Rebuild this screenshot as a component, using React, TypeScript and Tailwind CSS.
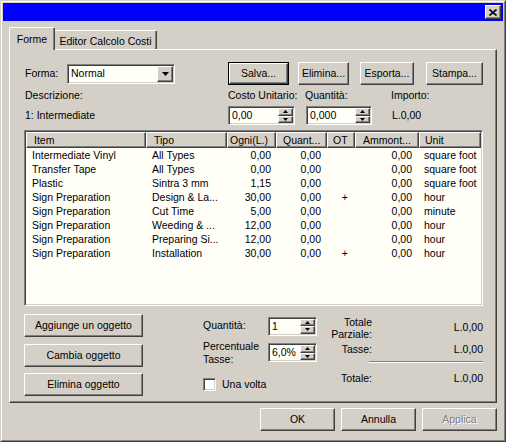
import React from 'react';

const RAISED =
  'border border-t-white border-l-white border-r-[#404040] border-b-[#404040] shadow-[inset_-1px_-1px_0_#808080] bg-[#d4d0c8]';
const SUNKEN =
  'border border-t-[#808080] border-l-[#808080] border-r-white border-b-white shadow-[inset_1px_1px_0_#404040,inset_-1px_-1px_0_#d4d0c8]';

const Btn: React.FC<{ className?: string; children: React.ReactNode; disabled?: boolean }> = ({
  className = '',
  children,
  disabled,
}) => (
  <div className={`${RAISED} flex items-center justify-center ${className}`}>
    <span className={disabled ? 'text-[#808080] [text-shadow:1px_1px_0_#fff]' : ''}>{children}</span>
  </div>
);

const Arrow: React.FC<{ up?: boolean }> = ({ up }) => (
  <svg width="5" height="3" viewBox="0 0 5 3">
    <polygon points={up ? '2.5,0 5,3 0,3' : '0,0 5,0 2.5,3'} fill="#000" />
  </svg>
);

const SpinField: React.FC<{ value: string; className?: string }> = ({ value, className = '' }) => (
  <div className={`${SUNKEN} bg-[#fffff8] flex h-[19px] ${className}`}>
    <span className="flex-1 pl-[3px] leading-[17px]">{value}</span>
    <div className="flex flex-col w-[16px] py-[1px] pr-[1px]">
      <div className={`${RAISED} flex-1 flex items-center justify-center`}>
        <Arrow up />
      </div>
      <div className={`${RAISED} flex-1 flex items-center justify-center`}>
        <Arrow />
      </div>
    </div>
  </div>
);

const COLS = [
  { label: 'Item', w: 'w-[120px]', head: 'pl-[7px]', cell: 'pl-[6px] text-left' },
  { label: 'Tipo', w: 'w-[81px]', head: 'pl-[7px]', cell: 'pl-[6px] text-left' },
  { label: 'Ogni(L.)', w: 'w-[49px]', head: 'pl-[2px]', cell: 'pr-[5px] text-right' },
  { label: 'Quant...', w: 'w-[51px]', head: 'pl-[6px]', cell: 'pr-[6px] text-right' },
  { label: 'OT', w: 'w-[28px]', head: 'pl-[5px]', cell: 'pr-[7px] text-right' },
  { label: 'Ammont...', w: 'w-[64px]', head: 'pl-[7px]', cell: 'pr-[7px] text-right' },
  { label: 'Unit', w: 'w-[62px]', head: 'pl-[5px]', cell: 'pl-[5px] text-left' },
];

const ROWS = [
  ['Intermediate Vinyl', 'All Types', '0,00', '0,00', '', '0,00', 'square foot'],
  ['Transfer Tape', 'All Types', '0,00', '0,00', '', '0,00', 'square foot'],
  ['Plastic', 'Sintra 3 mm', '1,15', '0,00', '', '0,00', 'square foot'],
  ['Sign Preparation', 'Design & La...', '30,00', '0,00', '+', '0,00', 'hour'],
  ['Sign Preparation', 'Cut Time', '5,00', '0,00', '', '0,00', 'minute'],
  ['Sign Preparation', 'Weeding & ...', '12,00', '0,00', '', '0,00', 'hour'],
  ['Sign Preparation', 'Preparing Si...', '12,00', '0,00', '', '0,00', 'hour'],
  ['Sign Preparation', 'Installation', '30,00', '0,00', '+', '0,00', 'hour'],
];

export default function App() {
  return (
    <div className="w-[506px] h-[442px] bg-[#d4d0c8] text-black text-[10.5px] font-['Liberation_Sans',Arial,sans-serif] border border-t-[#d4d0c8] border-l-[#d4d0c8] border-r-[#404040] border-b-[#404040] overflow-hidden">
      <div className="h-full border border-t-white border-l-white border-r-[#808080] border-b-[#808080] p-[1px] flex flex-col">
        {/* title bar */}
        <div className="h-[18px] bg-[#0000ff] flex items-center justify-end pr-[2px]">
          <div className={`${RAISED} w-[16px] h-[14px] flex items-center justify-center`}>
            <svg width="8" height="7" viewBox="0 0 8 7">
              <path d="M0.5 0.5 L7.5 6.5 M7.5 0.5 L0.5 6.5" stroke="#000" strokeWidth="1.6" />
            </svg>
          </div>
        </div>

        <div className="px-[6px]">
          {/* tabs */}
          <div className="flex items-end h-[22px] mt-[6px]">
            <div className="relative z-10 h-[23px] -mb-[1px] w-[46px] bg-[#d4d0c8] border-t border-l border-r border-t-white border-l-white border-r-[#404040] rounded-t-[2px] shadow-[inset_-1px_0_0_#808080] flex justify-center pt-[4px]">
              Forme
            </div>
            <div className="h-[19px] w-[102px] border-t border-r border-t-white border-r-[#404040] rounded-tr-[2px] shadow-[inset_-1px_0_0_#808080] flex justify-center pt-[3px]">
              Editor Calcolo Costi
            </div>
          </div>

          {/* panel */}
          <div className="h-[354px] border border-t-white border-l-white border-r-[#404040] border-b-[#404040] shadow-[inset_-1px_-1px_0_#808080] pl-[14px] pt-[12px]">
            <div className="flex items-center h-[23px]">
              <span className="w-[43px] pl-[1px]">Forma:</span>
              <div className={`${SUNKEN} bg-[#fffff8] w-[108px] h-[20px] flex items-center`}>
                <span className="flex-1 pl-[3px]">Normal</span>
                <div className={`${RAISED} w-[16px] h-[16px] mr-[1px] flex items-center justify-center`}>
                  <svg width="7" height="4" viewBox="0 0 7 4">
                    <polygon points="0,0 7,0 3.5,4" fill="#000" />
                  </svg>
                </div>
              </div>
              <div className="ml-[53px] border border-black">
                <Btn className="w-[59px] h-[21px]">Salva...</Btn>
              </div>
              <Btn className="ml-[9px] w-[51px] h-[23px]">Elimina...</Btn>
              <Btn className="ml-[11px] w-[54px] h-[23px]">Esporta...</Btn>
              <Btn className="ml-[12px] w-[57px] h-[23px]">Stampa...</Btn>
            </div>

            <div className="flex mt-[3px] h-[14px] leading-[14px]">
              <span className="w-[204px] pl-[1px]">Descrizione:</span>
              <span className="w-[77px]">Costo Unitario:</span>
              <span className="w-[86px]">Quantità:</span>
              <span>Importo:</span>
            </div>

            <div className="flex items-center mt-[4px] h-[19px]">
              <span className="w-[204px] pl-[1px]">1: Intermediate</span>
              <SpinField value="0,00" className="w-[67px]" />
              <SpinField value="0,000" className="ml-[11px] w-[66px]" />
              <span className="ml-[20px]">L.0,00</span>
            </div>

            {/* list */}
            <div className={`${SUNKEN} bg-[#fffff8] mt-[5px] w-[459px] h-[176px] p-[1px] overflow-hidden`}>
              <div className="flex h-[16px]">
                {COLS.map((c) => (
                  <div
                    key={c.label}
                    className={`${RAISED} ${c.w} ${c.head} shrink-0 leading-[14px] whitespace-nowrap overflow-hidden`}
                  >
                    {c.label}
                  </div>
                ))}
              </div>
              {ROWS.map((r, i) => (
                <div key={i} className="flex h-[14px] leading-[14px]">
                  {r.map((v, j) => (
                    <div key={j} className={`${COLS[j].w} ${COLS[j].cell} shrink-0 whitespace-nowrap overflow-hidden`}>
                      {v}
                    </div>
                  ))}
                </div>
              ))}
            </div>

            {/* bottom */}
            <div className="flex mt-[8px]">
              <div className="flex flex-col w-[119px]">
                <Btn className="h-[23px]">Aggiunge un oggetto</Btn>
                <Btn className="h-[23px] mt-[7px]">Cambia oggetto</Btn>
                <Btn className="h-[23px] mt-[6px]">Elimina oggetto</Btn>
              </div>

              <div className="ml-[60px] w-[114px] flex flex-col">
                <div className="flex items-center mt-[3px] h-[18px]">
                  <span className="w-[65px]">Quantità:</span>
                  <SpinField value="1" className="w-[49px] h-[18px]" />
                </div>
                <div className="flex items-center mt-[8px] h-[19px]">
                  <span className="w-[65px] leading-[13px]">
                    Percentuale
                    <br />
                    Tasse:
                  </span>
                  <SpinField value="6,0%" className="w-[49px]" />
                </div>
                <div className="flex items-center mt-[15px]">
                  <div className={`${SUNKEN} w-[13px] h-[13px] bg-white`} />
                  <span className="ml-[6px]">Una volta</span>
                </div>
              </div>

              <div className="ml-[3px] w-[163px] flex flex-col">
                <div className="flex items-center mt-[2px] h-[24px]">
                  <span className="w-[52px] text-right leading-[12px]">
                    Totale
                    <br />
                    Parziale:
                  </span>
                  <span className="flex-1 text-right">L.0,00</span>
                </div>
                <div className="flex items-center mt-[3px] h-[14px]">
                  <span className="w-[52px] text-right">Tasse:</span>
                  <span className="flex-1 text-right">L.0,00</span>
                </div>
                <div className="ml-[49px] mt-[4px] h-[2px] border-t border-t-[#808080] border-b border-b-white" />
                <div className="flex items-center mt-[9px] h-[14px]">
                  <span className="w-[52px] text-right">Totale:</span>
                  <span className="flex-1 text-right">L.0,00</span>
                </div>
              </div>
            </div>
          </div>

          {/* dialog buttons */}
          <div className="flex justify-end gap-[6px] mt-[5px]">
            <Btn className="w-[75px] h-[23px]">OK</Btn>
            <Btn className="w-[75px] h-[23px]">Annulla</Btn>
            <Btn className="w-[75px] h-[23px]" disabled>
              Applica
            </Btn>
          </div>
        </div>
      </div>
    </div>
  );
}
